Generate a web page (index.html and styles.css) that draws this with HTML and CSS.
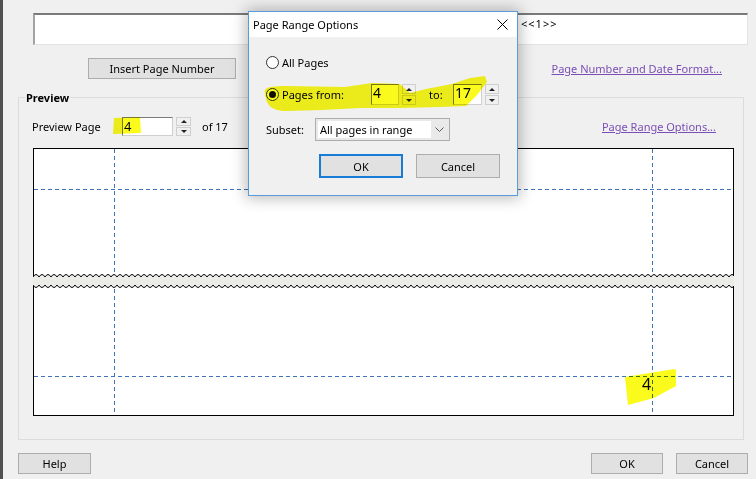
FILE: index.html
```html
<!DOCTYPE html>
<html lang="en">
<head>
<meta charset="utf-8">
<title>Header and Footer</title>
<link rel="stylesheet" href="styles.css">
</head>
<body>
<div class="app">
  <div class="strip"></div>
  <div class="main">
    <div class="header-fields">
      <div class="field"></div>
      <div class="field"></div>
      <div class="field field-text">&lt;&lt;1&gt;&gt;</div>
    </div>
    <div class="insert-row">
      <button class="btn insert-btn">Insert Page Number</button>
      <a class="link format-link">Page Number and Date Format...</a>
    </div>
    <div class="group">
      <div class="group-label">Preview</div>
      <div class="preview-row">
        <span class="pp-label">Preview Page</span>
        <div class="textbox pp-input">4</div>
        <div class="spin">
          <span class="spin-btn"><i class="tri-up"></i></span>
          <span class="spin-btn"><i class="tri-down"></i></span>
        </div>
        <span class="of-label">of 17</span>
        <a class="link range-link">Page Range Options...</a>
      </div>
      <div class="canvas">
        <div class="page page-top">
          <svg class="guides" width="699" height="124" viewBox="0 0 699 124">
            <line x1="80.5" y1="0" x2="80.5" y2="124"/>
            <line x1="618.5" y1="0" x2="618.5" y2="124"/>
            <line x1="0" y1="40.5" x2="699" y2="40.5"/>
          </svg>
        </div>
        <svg class="tear" width="701" height="16" viewBox="0 0 701 16">
          <defs>
            <pattern id="zig" x="0" y="0" width="6" height="16" patternUnits="userSpaceOnUse">
              <rect width="6" height="16" fill="#ebebe7"/>
              <path d="M0,0H6V4Q3,-1 0,4Z" fill="#fff"/>
              <path d="M0,4Q3,-1 6,4" fill="none" stroke="#000" stroke-width="1"/>
              <path d="M0,16H6V12Q3,17 0,12Z" fill="#fff"/>
              <path d="M0,12Q3,17 6,12" fill="none" stroke="#000" stroke-width="1"/>
            </pattern>
          </defs>
          <rect x="0" y="0" width="701" height="16" fill="url(#zig)"/>
          <line x1="0.5" y1="0" x2="0.5" y2="3" stroke="#000"/>
          <line x1="700.5" y1="0" x2="700.5" y2="3" stroke="#000"/>
          <line x1="0.5" y1="13" x2="0.5" y2="16" stroke="#000"/>
          <line x1="700.5" y1="13" x2="700.5" y2="16" stroke="#000"/>
        </svg>
        <div class="page page-bottom">
          <svg class="guides" width="699" height="126" viewBox="0 0 699 126">
            <line x1="80.5" y1="0" x2="80.5" y2="126"/>
            <line x1="618.5" y1="0" x2="618.5" y2="126"/>
            <line x1="0" y1="87.5" x2="699" y2="87.5"/>
            <text class="page-num" x="608" y="101">4</text>
          </svg>
        </div>
      </div>
    </div>
    <div class="footer">
      <button class="btn foot-btn help-btn">Help</button>
      <button class="btn foot-btn ok-btn">OK</button>
      <button class="btn foot-btn cancel-btn">Cancel</button>
    </div>
  </div>

  <div class="dialog">
    <div class="dlg-title">
      <span>Page Range Options</span>
      <svg class="close-x" width="11" height="11" viewBox="0 0 11 11">
        <path d="M0.5,0.5L10.5,10.5M10.5,0.5L0.5,10.5" stroke="#000" stroke-width="1"/>
      </svg>
    </div>
    <div class="dlg-body">
      <div class="radio-row">
        <span class="radio"></span>
        <span class="radio-text">All Pages</span>
      </div>
      <div class="range-row">
        <div class="range-label">
          <span class="radio checked"></span>
          <span class="radio-text">Pages from:</span>
        </div>
        <div class="textbox num-input from-input">4</div>
        <div class="spin spin-tall">
          <span class="spin-btn"><i class="tri-up"></i></span>
          <span class="spin-btn"><i class="tri-down"></i></span>
        </div>
        <span class="to-label">to:</span>
        <div class="textbox num-input to-input">17</div>
        <div class="spin spin-tall">
          <span class="spin-btn"><i class="tri-up"></i></span>
          <span class="spin-btn"><i class="tri-down"></i></span>
        </div>
      </div>
      <div class="subset-row">
        <span class="subset-label">Subset:</span>
        <div class="select">
          <span class="select-value">All pages in range</span>
          <span class="select-arrow">
            <svg width="9" height="5" viewBox="0 0 9 5"><path d="M0.5,0.5L4.5,4.5L8.5,0.5" fill="none" stroke="#555" stroke-width="1"/></svg>
          </span>
        </div>
      </div>
      <div class="dlg-buttons">
        <button class="btn dlg-btn default-btn">OK</button>
        <button class="btn dlg-btn">Cancel</button>
      </div>
    </div>
  </div>

  <svg class="marker" width="756" height="479" viewBox="0 0 756 479">
    <path d="M265,93 C263,87 272,86 286,86 L345,87 L372,83 L400,84 L410,93 L426,89 L452,84 L470,78 L485,76 L487,82 L477,95 L466,106 L440,107 L400,108 L360,108 L322,110 L287,111 C270,111 266,104 265,93 Z"/>
    <path d="M114,118 L140,117 L141,133 L113,134 Z"/>
    <path d="M625,377 L674,369 L676,370 L676,386 L654,398 L628,405 Z"/>
  </svg>
</div>
</body>
</html>
```

FILE: styles.css
```css
* { box-sizing: border-box; }

body {
  margin: 0;
  background: #f0f0f0;
  font-family: "Noto Sans", "Open Sans", sans-serif;
  font-size: 11px;
  color: #000;
}

.app {
  position: relative;
  width: 756px;
  height: 479px;
  overflow: hidden;
  display: flex;
  background: #f0f0f0;
}

.strip {
  width: 3px;
  flex: none;
  background: #505050;
}

.main {
  flex: 1;
  min-width: 0;
  display: flex;
  flex-direction: column;
}

/* header text fields */
.header-fields {
  display: grid;
  grid-template-columns: repeat(3, 1fr);
  column-gap: 8px;
  margin: 13px 8px 0 30px;
  height: 32px;
}

.field {
  background: #fff;
  border-style: solid;
  border-width: 2px 1px 1px 2px;
  border-color: #7a7a7a #e3e3e3 #e3e3e3 #a3a3a3;
}

.field-text {
  padding: 2px 0 0 4px;
  line-height: 14px;
  letter-spacing: 1px;
}

/* buttons */
.btn {
  font: inherit;
  color: #000;
  height: 21px;
  padding: 0;
  border: 1px solid #adadad;
  background: #e1e1e1;
  display: flex;
  align-items: center;
  justify-content: center;
}

.insert-row {
  display: flex;
  align-items: center;
  margin-top: 13px;
  height: 21px;
  padding: 0 34px 0 85px;
}

.insert-btn { width: 148px; }

.link {
  color: #7a4eb5;
  text-decoration: underline;
}

.format-link { margin-left: auto; }

/* preview group */
.group {
  margin: 18px 12px 0 15px;
  height: 343px;
  border: 1px solid #dcdcdc;
  display: flex;
  flex-direction: column;
}

.group-label {
  align-self: flex-start;
  margin: -8px 0 0 6px;
  padding: 0 1px;
  line-height: 16px;
  font-weight: bold;
  background: #f0f0f0;
}

.preview-row {
  display: flex;
  align-items: center;
  margin-top: 11px;
  height: 19px;
  padding-left: 13px;
}

.pp-label { width: 90px; }

.textbox {
  background: #fff;
  border: 1px solid;
  border-color: #7a7a7a #cfcfcf #cfcfcf #7a7a7a;
}

.pp-input {
  width: 51px;
  height: 19px;
  font-size: 13px;
  line-height: 17px;
  padding-left: 1px;
}

.spin {
  display: flex;
  flex-direction: column;
  gap: 1px;
  width: 15px;
  height: 19px;
  margin-left: 3px;
}

.spin-tall { height: 21px; width: 14px; }

.spin-btn {
  flex: 1;
  display: flex;
  align-items: center;
  justify-content: center;
  background: #f0f0f0;
  border: 1px solid #cfcfcf;
}

.tri-up, .tri-down {
  width: 0;
  height: 0;
  border-left: 3px solid transparent;
  border-right: 3px solid transparent;
}

.tri-up { border-bottom: 3px solid #222; }
.tri-down { border-top: 3px solid #222; }

.of-label { margin-left: 11px; }

.range-link {
  margin-left: auto;
  margin-right: 27px;
}

/* canvas */
.canvas {
  margin: 12px 0 0 14px;
  width: 701px;
  display: flex;
  flex-direction: column;
}

.page {
  background: #fff;
  border: 1px solid #000;
}

.page-top {
  height: 125px;
  border-bottom: 0;
}

.page-bottom {
  height: 127px;
  border-top: 0;
}

.guides { display: block; }

.guides line {
  stroke: #3f72b8;
  stroke-width: 1;
  stroke-dasharray: 4 3;
}

.page-num {
  font-family: "Noto Sans", sans-serif;
  font-size: 16px;
  fill: #000;
}

.tear { display: block; }

/* footer */
.footer {
  display: flex;
  margin-top: 13px;
  padding: 0 8px 0 15px;
}

.help-btn { width: 73px; }
.ok-btn { width: 72px; margin-left: auto; }
.cancel-btn { width: 72px; margin-left: 13px; }

/* dialog */
.dialog {
  position: absolute;
  left: 248px;
  top: 11px;
  width: 270px;
  height: 185px;
  border: 1px solid #5b9bd8;
  background: #f0f0f0;
  box-shadow: 0 0 14px 2px rgba(0, 0, 0, 0.28);
  display: flex;
  flex-direction: column;
}

.dlg-title {
  height: 25px;
  background: #fff;
  display: flex;
  align-items: center;
  padding-left: 4px;
}

.close-x {
  margin-left: auto;
  margin-right: 9px;
}

.dlg-body {
  display: flex;
  flex-direction: column;
  padding: 17px 0 0 17px;
}

.radio-row {
  display: flex;
  align-items: center;
  height: 16px;
}

.radio {
  width: 13px;
  height: 13px;
  border-radius: 50%;
  border: 1px solid #333;
  background: #fff;
  display: flex;
  align-items: center;
  justify-content: center;
  flex: none;
}

.radio.checked::after {
  content: "";
  width: 7px;
  height: 7px;
  border-radius: 50%;
  background: #111;
}

.radio-text { margin-left: 3px; }

.range-row {
  display: flex;
  align-items: center;
  margin-top: 14px;
  height: 21px;
}

.range-label {
  display: flex;
  align-items: center;
  width: 105px;
}

.num-input {
  height: 21px;
  font-size: 14px;
  line-height: 16px;
  padding-left: 1px;
}

.from-input { width: 28px; }
.to-input { width: 29px; }

.to-label {
  width: 37px;
  padding-left: 13px;
}

.subset-row {
  display: flex;
  align-items: center;
  margin-top: 13px;
  height: 23px;
}

.subset-label { width: 49px; }

.select {
  width: 135px;
  height: 23px;
  border: 1px solid #adadad;
  background: #e9e9e9;
  display: flex;
  padding: 2px;
}

.select-value {
  width: 113px;
  background: #fff;
  display: flex;
  align-items: center;
  padding-left: 2px;
}

.select-arrow {
  flex: 1;
  display: flex;
  align-items: center;
  justify-content: center;
}

.dlg-buttons {
  display: flex;
  gap: 13px;
  margin: 13px 0 0 53px;
}

.dlg-btn {
  width: 84px;
  height: 24px;
}

.default-btn {
  border: 2px solid #1a7bd6;
}

/* highlighter marks */
.marker {
  position: absolute;
  left: 0;
  top: 0;
  pointer-events: none;
  mix-blend-mode: multiply;
}

.marker path { fill: #fafa1c; }
```
